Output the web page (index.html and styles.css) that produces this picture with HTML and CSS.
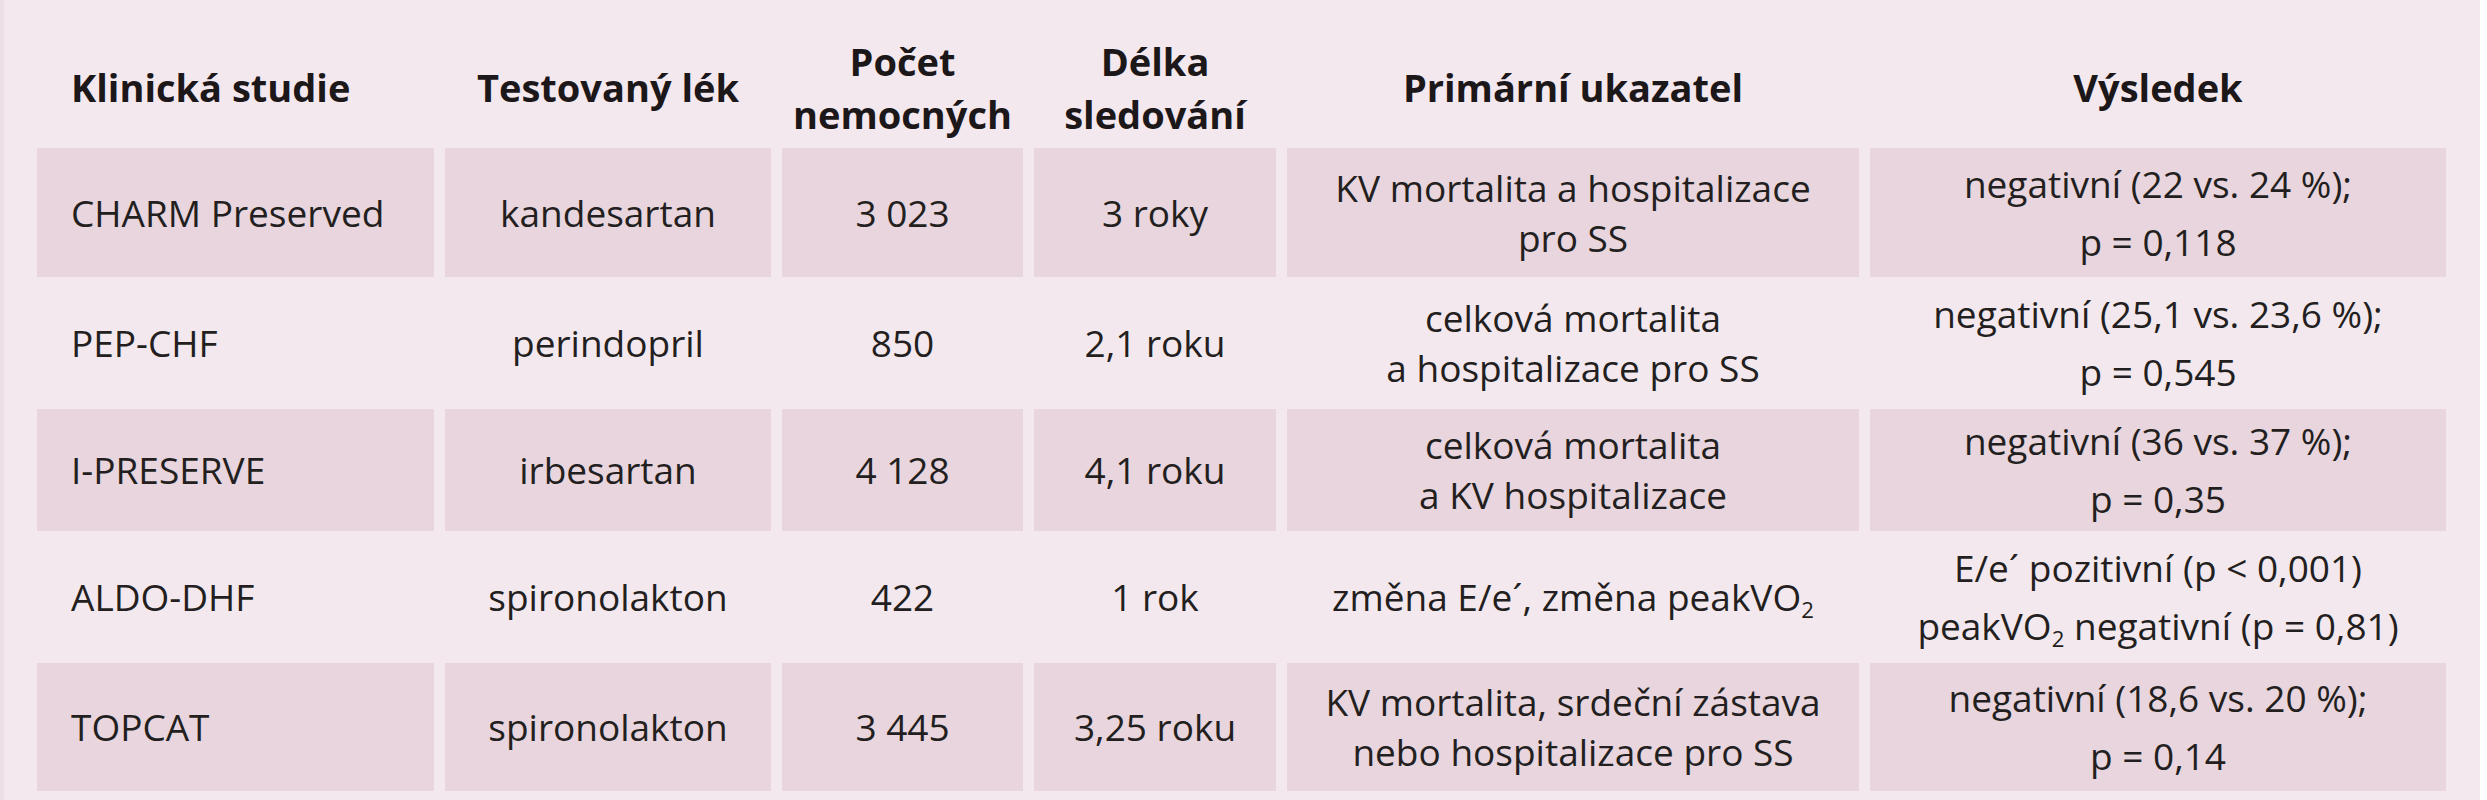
FILE: index.html
```html
<!DOCTYPE html>
<html lang="cs">
<head>
<meta charset="utf-8">
<title>Klinické studie</title>
<link rel="stylesheet" href="styles.css">
</head>
<body>
<div class="page">
  <div class="grid">
    <div class="row head">
      <div class="cell c1"><span>Klinická studie</span></div>
      <div class="cell"><span>Testovaný lék</span></div>
      <div class="cell"><span>Počet<br>nemocných</span></div>
      <div class="cell"><span>Délka<br>sledování</span></div>
      <div class="cell"><span>Primární ukazatel</span></div>
      <div class="cell"><span>Výsledek</span></div>
    </div>
    <div class="row shaded">
      <div class="cell c1"><span>CHARM Preserved</span></div>
      <div class="cell"><span>kandesartan</span></div>
      <div class="cell"><span>3 023</span></div>
      <div class="cell"><span>3 roky</span></div>
      <div class="cell"><span>KV mortalita a hospitalizace<br>pro SS</span></div>
      <div class="cell c6"><span>negativní (22 vs. 24 %);<br>p = 0,118</span></div>
    </div>
    <div class="row plain">
      <div class="cell c1"><span>PEP-CHF</span></div>
      <div class="cell"><span>perindopril</span></div>
      <div class="cell"><span>850</span></div>
      <div class="cell"><span>2,1 roku</span></div>
      <div class="cell"><span>celková mortalita<br>a hospitalizace pro SS</span></div>
      <div class="cell c6"><span>negativní (25,1 vs. 23,6 %);<br>p = 0,545</span></div>
    </div>
    <div class="row shaded">
      <div class="cell c1"><span>I-PRESERVE</span></div>
      <div class="cell"><span>irbesartan</span></div>
      <div class="cell"><span>4 128</span></div>
      <div class="cell"><span>4,1 roku</span></div>
      <div class="cell"><span>celková mortalita<br>a KV hospitalizace</span></div>
      <div class="cell c6"><span>negativní (36 vs. 37 %);<br>p = 0,35</span></div>
    </div>
    <div class="row plain">
      <div class="cell c1"><span>ALDO-DHF</span></div>
      <div class="cell"><span>spironolakton</span></div>
      <div class="cell"><span>422</span></div>
      <div class="cell"><span>1 rok</span></div>
      <div class="cell"><span>změna E/e´, změna peakVO<sub class="sub">2</sub></span></div>
      <div class="cell c6"><span>E/e´ pozitivní (p &lt; 0,001)<br>peakVO<sub class="sub">2</sub> negativní (p = 0,81)</span></div>
    </div>
    <div class="row shaded">
      <div class="cell c1"><span>TOPCAT</span></div>
      <div class="cell"><span>spironolakton</span></div>
      <div class="cell"><span>3 445</span></div>
      <div class="cell"><span>3,25 roku</span></div>
      <div class="cell"><span>KV mortalita, srdeční zástava<br>nebo hospitalizace pro SS</span></div>
      <div class="cell c6"><span>negativní (18,6 vs. 20 %);<br>p = 0,14</span></div>
    </div>
  </div>
</div>
</body>
</html>
```

FILE: styles.css
```css
html, body {
  margin: 0;
  padding: 0;
}

body {
  background: #ffffff;
  width: 2487px;
  height: 800px;
  overflow: hidden;
}

.page {
  box-sizing: border-box;
  width: 2480px;
  height: 800px;
  background: #f4e8ef;
  border-left: 4px solid #ecdee6;
  padding: 32px 0 0 33px;
  font-family: "Open Sans", "Liberation Sans", sans-serif;
  font-size: 37px;
  color: #231f20;
}

.grid {
  display: grid;
  grid-template-columns: 397px 326px 241px 242px 572px 576px;
  grid-template-rows: 111px 129px 122px 122px 122px 128px;
  column-gap: 11px;
  row-gap: 5px;
}

.row {
  display: contents;
}

.cell {
  display: flex;
  align-items: center;
  justify-content: center;
  text-align: center;
  line-height: 50px;
  white-space: nowrap;
}

.c1 {
  justify-content: flex-start;
  text-align: left;
  padding-left: 34px;
}

.c6 {
  line-height: 58px;
}

.head .cell {
  font-size: 38px;
  font-weight: bold;
  line-height: 53px;
  color: #1c1719;
}

.shaded .cell {
  background: #e8d5de;
}

.sub {
  font-size: 0.6em;
  line-height: 0;
  vertical-align: -0.3em;
}
```
